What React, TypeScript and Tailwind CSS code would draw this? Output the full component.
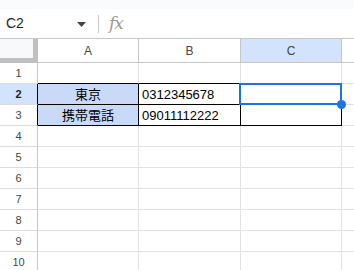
import React from "react";

const cols = ["A", "B", "C"];
const rows = [1, 2, 3, 4, 5, 6, 7, 8, 9, 10];

const data: Record<string, string> = {
  A2: "東京",
  A3: "携帯電話",
  B2: "0312345678",
  B3: "09011112222",
};

// Range A2:C3 has black borders all round
const inRange = (c: string, r: number) => r >= 2 && r <= 3 && cols.includes(c);

const Cell: React.FC<{ col: string; row: number }> = ({ col, row }) => {
  const key = `${col}${row}`;
  const text = data[key];
  const boxed = inRange(col, row);
  const aboveBoxed = row === 1;
  const shaded = col === "A" && boxed;
  const selected = key === "C2";

  return (
    <div
      className={`relative flex items-end pb-px text-[13px] text-black border-r border-b ${
        boxed ? "border-r-black border-b-black" : "border-r-[#e1e1e1] border-b-[#e1e1e1]"
      } ${aboveBoxed ? "border-b-black" : ""} ${shaded ? "bg-[#c9daf8] justify-center" : "bg-white pl-[3px]"}`}
    >
      {text && <span className="leading-[17px] whitespace-nowrap">{text}</span>}
      {selected && (
        <>
          <div className="absolute -left-[2px] -top-px -right-px -bottom-px border-2 border-[#1a73e8] z-10" />
          <div className="absolute -right-[5px] -bottom-[5px] w-[9px] h-[9px] rounded-full bg-[#1a73e8] z-20" />
        </>
      )}
    </div>
  );
};

export default function App() {
  return (
    <div
      className="w-[354px] h-[270px] overflow-hidden bg-white"
      style={{ fontFamily: '"Liberation Sans", Arial, "Noto Sans CJK JP", sans-serif' }}
    >
      {/* top strip */}
      <div className="h-[9px] bg-[#f9fbfd]" />

      {/* name box + formula bar */}
      <div className="h-[29px] flex items-center">
        <div className="w-[98px] flex items-center pl-[6px] pr-[12px]">
          <span className="text-[14px] text-[#1f1f1f] flex-1">C2</span>
          <svg width="9" height="5" viewBox="0 0 9 5" className="mt-px">
            <path d="M0 0 L9 0 L4.5 5 Z" fill="#444746" />
          </svg>
        </div>
        <div className="w-px h-[18px] bg-[#c7c7c7]" />
        <span
          className="ml-[10px] text-[17px] italic text-[#9a9a9a] tracking-[-1px]"
          style={{ fontFamily: '"DejaVu Serif", "Liberation Serif", serif' }}
        >
          fx
        </span>
      </div>

      {/* sheet grid */}
      <div className="border-t border-[#c4c7c5] grid grid-cols-[38px_101px_102px_101px_1fr] grid-rows-[24px_repeat(10,21px)]">
        {/* corner */}
        <div className="bg-[#f8f9fa] border-r-[5px] border-b-[5px] border-[#c0c0c0]" />
        {cols.map((c) => (
          <div
            key={c}
            className={`flex items-center justify-center text-[12px] text-[#444746] border-r border-b border-[#c4c7c5] ${
              c === "C" ? "bg-[#d3e3fd]" : "bg-white"
            }`}
          >
            {c}
          </div>
        ))}
        <div className="border-b border-[#c4c7c5] bg-white" />

        {rows.map((r) => (
          <React.Fragment key={r}>
            <div
              className={`flex items-center justify-center text-[11px] border-r border-b border-b-[#dadce0] ${
                r === 2 || r === 3 ? "border-r-black" : "border-r-[#c4c7c5]"
              } ${r === 2 ? "bg-[#d3e3fd] font-bold text-[#1f1f1f]" : "bg-white text-[#444746]"}`}
            >
              {r}
            </div>
            {cols.map((c) => (
              <Cell key={c} col={c} row={r} />
            ))}
            <div className="border-b border-[#e1e1e1] bg-white" />
          </React.Fragment>
        ))}
      </div>
    </div>
  );
}
